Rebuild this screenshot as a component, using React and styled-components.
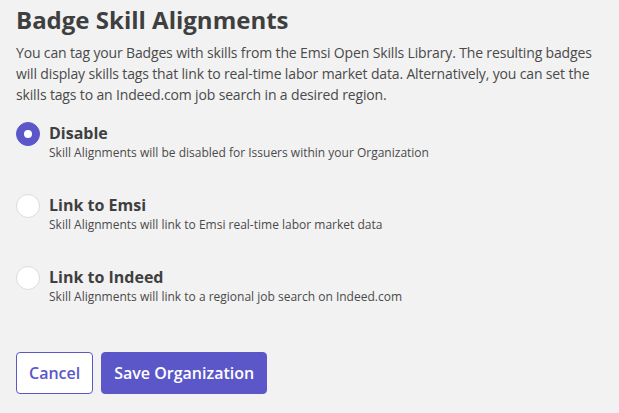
import React, { useState } from 'react';
import styled, { createGlobalStyle } from 'styled-components';

const GlobalStyle = createGlobalStyle`
  body {
    margin: 0;
    background: #f2f2f2;
    font-family: "Open Sans", "Liberation Sans", sans-serif;
    color: #444;
  }
`;

const Page = styled.div`
  padding: 4px 16px 16px;
`;

const Title = styled.h2`
  margin: 0 0 6px;
  font-size: 24px;
  line-height: 32px;
  font-weight: 700;
  color: #3f3f3f;
`;

const Intro = styled.p`
  margin: 0;
  font-size: 14px;
  line-height: 21px;
  letter-spacing: -0.15px;
  color: #4a4a4a;
`;

const Options = styled.div`
  display: flex;
  flex-direction: column;
  gap: 32px;
  margin-top: 17px;
`;

const Option = styled.label`
  display: flex;
  align-items: flex-start;
  gap: 9px;
  cursor: pointer;
`;

const Radio = styled.span`
  flex: none;
  width: 24px;
  height: 24px;
  box-sizing: border-box;
  border-radius: 50%;
  background: ${p => (p.checked ? '#5b57c8' : '#fff')};
  border: 1px solid ${p => (p.checked ? '#5b57c8' : '#dcdcdc')};
  display: flex;
  align-items: center;
  justify-content: center;
  &::after {
    content: '';
    width: 8px;
    height: 8px;
    border-radius: 50%;
    background: #fff;
    display: ${p => (p.checked ? 'block' : 'none')};
  }
`;

const Text = styled.div`
  display: flex;
  flex-direction: column;
`;

const Label = styled.span`
  font-size: 16px;
  line-height: 22px;
  font-weight: 700;
  color: #3f3f3f;
`;

const Hint = styled.span`
  font-size: 12px;
  line-height: 18px;
  color: #4a4a4a;
`;

const Actions = styled.div`
  display: flex;
  gap: 8px;
  margin-top: 46px;
`;

const Button = styled.button`
  height: 42px;
  padding: 0 12px;
  border-radius: 4px;
  font-family: inherit;
  font-size: 16px;
  font-weight: 600;
  cursor: pointer;
  border: 1px solid #5b57c8;
  background: ${p => (p.primary ? '#5b57c8' : '#fff')};
  color: ${p => (p.primary ? '#fff' : '#5b57c8')};
`;

const options = [
  { id: 'disable', label: 'Disable', hint: 'Skill Alignments will be disabled for Issuers within your Organization' },
  { id: 'emsi', label: 'Link to Emsi', hint: 'Skill Alignments will link to Emsi real-time labor market data' },
  { id: 'indeed', label: 'Link to Indeed', hint: 'Skill Alignments will link to a regional job search on Indeed.com' },
];

export default function App() {
  const [value, setValue] = useState('disable');
  return (
    <Page>
      <GlobalStyle />
      <Title>Badge Skill Alignments</Title>
      <Intro>
        You can tag your Badges with skills from the Emsi Open Skills Library. The resulting badges
        will display skills tags that link to real-time labor market data. Alternatively, you can set the
        skills tags to an Indeed.com job search in a desired region.
      </Intro>
      <Options>
        {options.map(o => (
          <Option key={o.id} onClick={() => setValue(o.id)}>
            <Radio checked={value === o.id} />
            <Text>
              <Label>{o.label}</Label>
              <Hint>{o.hint}</Hint>
            </Text>
          </Option>
        ))}
      </Options>
      <Actions>
        <Button>Cancel</Button>
        <Button primary>Save Organization</Button>
      </Actions>
    </Page>
  );
}
